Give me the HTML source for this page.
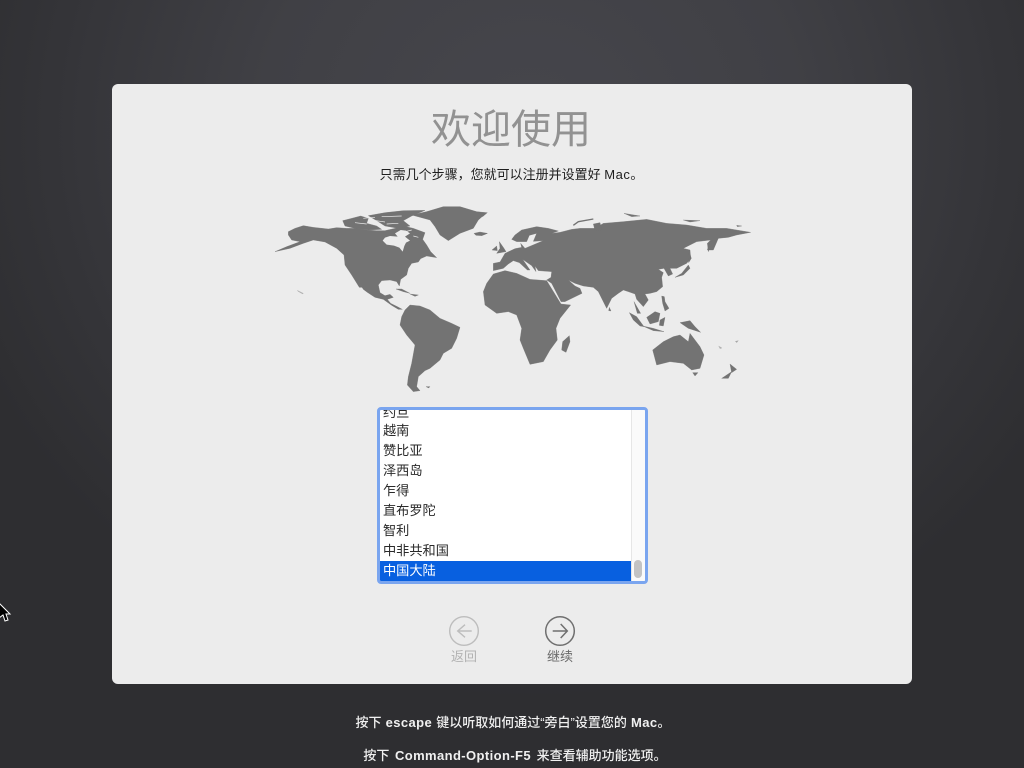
<!DOCTYPE html>
<html lang="zh-CN"><head><meta charset="utf-8"><title>欢迎使用</title>
<style>
html,body{margin:0;padding:0;width:1024px;height:768px;overflow:hidden;background:#2e2e31}
body{position:relative;font-family:"Liberation Sans","Noto Sans CJK SC",sans-serif}
#bg{position:absolute;inset:0;background:radial-gradient(ellipse 600px 570px at 530px 130px,#46464c 0%,#404045 45%,#343438 80%,#2e2e31 100%)}
#card{position:absolute;left:112px;top:84px;width:800px;height:600px;background:#ececec;border-radius:6px}
.t{position:absolute;white-space:nowrap}
#h{left:0;width:1022px;top:99.5px;text-align:center;font-size:40px;line-height:60px;color:#929292}
#s{left:0;width:1023px;top:165px;text-align:center;font-size:13px;line-height:20px;color:#1e1e1e}
#s span{letter-spacing:.5px}
#list{position:absolute;left:377px;top:407px;width:265px;height:171px;border:3px solid #7aa5ef;border-radius:4px;background:#fff;overflow:hidden}
#sb{position:absolute;left:251px;top:0;width:14px;height:171px;background:#fafafa;border-left:1px solid #e6e6e6;box-sizing:border-box}
#th{position:absolute;left:254px;top:150px;width:8px;height:18px;background:#c3c3c3;border-radius:4px}
#sel{position:absolute;left:0;top:151px;width:251px;height:19.5px;background:#0860e0}
.r{position:absolute;left:3px;font-size:13.2px;line-height:20px;color:#2a2a2a;white-space:nowrap}
.f{left:0;text-align:center;font-size:13px;line-height:20px;color:#f0f0f0;font-weight:500}
.f b{font-weight:700;font-size:13px;letter-spacing:.4px}
svg{position:absolute}
</style></head><body>
<div id="bg"></div>
<div id="card"></div>
<div class="t" id="h">欢迎使用</div>
<div class="t" id="s">只需几个步骤，您就可以注册并设置好 <span>Mac</span>。</div>

<svg style="left:0;top:0" width="1024" height="768" viewBox="0 0 1024 768">
<defs><filter id="b" x="-5%" y="-5%" width="110%" height="110%"><feGaussianBlur stdDeviation=".35"/></filter></defs>
<g filter="url(#b)">
<g fill="#737373" stroke="#737373" stroke-width="1" stroke-linejoin="round" transform="translate(270 200) scale(.33333)">
<!-- North America -->
<path d="M55,95L75,85L100,77L130,82L175,87L200,83L230,85L260,85L290,90L320,92L345,92L375,85L400,78L430,85L465,98L458,118L470,135L482,155L500,173L470,168L452,176L445,186L425,190L415,205L410,225L392,238L388,258L380,245L360,240L335,242L325,255L330,278L345,287L360,283L370,292L352,298L362,310L382,320L397,328L385,328L365,316L340,298L315,292L292,277L280,268L262,240L276,262L268,262L245,225L225,195L222,165L200,145L165,126L130,120L100,130L60,145L15,155L50,140L90,125L65,120L55,105Z"/>
<path fill="#ececec" stroke="none" d="M338,122L345,113L360,108L383,110L375,100L392,90L408,92L420,100L405,110L420,122L408,128L403,138L398,155L388,143L372,137L350,134Z"/>
<path fill="none" stroke="#ececec" stroke-width="2" d="M430,108L445,112M395,98L425,90"/>
<!-- Arctic islands -->
<path d="M218,62L245,55L272,48L295,55L290,70L320,78L335,88L295,90L255,85L225,78Z"/>
<path d="M295,47L345,38L400,32L465,31L425,48L400,62L420,78L385,85L345,78L320,62Z"/>
<path fill="none" stroke="#ececec" stroke-width="2" d="M255,68L290,72M305,60L345,66M335,50L395,48M350,72L385,70M280,55L315,52"/>
<!-- Greenland -->
<path d="M425,45L470,35L520,20L570,20L620,35L650,38L625,60L610,85L570,100L535,122L510,105L495,80L480,60Z"/>
<path d="M612,100L630,96L652,100L635,107L618,106Z"/>
<!-- Caribbean -->
<path d="M378,267L395,267L420,280L400,275Z"/><path d="M420,282L445,285L435,289Z"/>
<path d="M82,271L100,280L98,282L84,274Z" opacity=".5"/>
<!-- South America -->
<path d="M395,350L405,330L420,315L450,318L480,330L510,355L545,370L570,382L560,415L545,445L520,460L510,480L480,505L465,512L445,530L440,560L450,572L430,575L412,555L415,530L425,490L435,435L410,405L390,375Z"/>
<path d="M468,560L480,560L476,564Z"/>
</g>
<g fill="#737373" stroke="#737373" stroke-width="1" stroke-linejoin="round" transform="translate(480 200) scale(.33333)">
<!-- Eurasia -->
<path d="M40,212L40,190L60,186L75,160L105,146L125,142L122,130L135,145L190,122L160,124L170,100L148,106L140,125L110,125L95,118L105,105L125,90L170,80L205,85L235,93L215,100L240,97L275,88L300,85L345,85L370,70L430,65L500,58L560,70L620,75L680,85L740,85L812,97L770,105L745,112L715,115L695,132L685,155L682,130L692,120L650,125L610,145L630,150L632,175L620,190L590,205L570,205L578,222L565,228L552,205L535,208L550,218L545,232L548,260L530,275L510,280L495,282L505,300L490,320L470,298L465,282L445,275L430,270L415,280L395,295L380,325L365,295L355,275L340,262L310,258L285,250L265,240L285,258L300,265L306,280L255,305L243,305L215,250L200,240L213,232L215,215L175,212L165,198L168,215L155,197L128,178L150,210L142,210L118,188L100,182L85,192L70,205Z"/>
<!-- Malay -->
<path d="M462,305L482,340L472,340Z"/>
<!-- Africa -->
<path d="M10,275L20,250L40,222L75,212L110,220L150,238L200,242L243,312L272,315L240,355L228,385L232,420L210,450L190,485L150,493L130,445L120,420L125,385L110,345L85,335L50,340L15,315Z"/>
<path d="M268,407L270,425L258,457L245,450L248,425Z"/>
<!-- UK / Iceland part -->
<path d="M58,125L72,145L78,155L50,160L60,145Z"/><path d="M36,150L50,138L52,152Z"/>
<path d="M0,40L22,38L8,50Z"/><path d="M0,100L22,100L5,107Z"/>
<!-- Arctic -->
<path fill="none" stroke-width="4" d="M280,76L295,65L340,57"/><path d="M340,72L360,68L365,90L345,92Z"/>
<path d="M432,40L480,48L455,50Z"/><path d="M610,60L660,62L630,66Z"/><path d="M770,76L785,78L772,80Z"/>
<!-- Sakhalin / Japan -->
<path d="M682,150L690,125L715,115L700,150Z"/>
<path d="M585,232L605,220L625,195L630,205L610,225Z"/><path d="M628,155L634,175L626,188L624,165Z"/>
<!-- SE Asia islands -->
<path d="M448,338L470,350L492,380L480,378L460,360Z"/>
<path d="M500,352L525,335L540,340L535,365L510,372Z"/>
<path d="M488,378L520,385L552,395L520,392Z"/>
<path d="M540,360L555,352L550,378L538,376Z"/>
<path d="M545,288L553,290L555,305L567,325L555,333L548,310Z"/>
<path d="M600,368L630,362L645,380L662,397L625,385Z"/>
<path d="M388,322L393,333L386,332Z"/>
<!-- Australia -->
<path d="M518,450L550,425L580,410L600,405L625,425L630,400L660,440L672,465L660,505L635,510L610,490L570,485L530,495Z"/>
<path d="M638,518L654,518L645,528Z"/>
<path d="M750,492L770,508L755,518Z"/><path d="M725,535L755,515L745,535Z"/>
<path d="M716,438L726,444L720,446Z" opacity=".5"/><path d="M766,424L775,422L770,428Z" opacity=".6"/>
</g>
</g>
</svg>

<div id="list">
<div class="r" style="top:-7px">约旦</div>
<div class="r" style="top:11px">越南</div>
<div class="r" style="top:31px">赞比亚</div>
<div class="r" style="top:51px">泽西岛</div>
<div class="r" style="top:71px">乍得</div>
<div class="r" style="top:91px">直布罗陀</div>
<div class="r" style="top:111px">智利</div>
<div class="r" style="top:131px">中非共和国</div>
<div id="sel"></div>
<div class="r" style="top:151px;color:#fff">中国大陆</div>
<div id="sb"></div><div id="th"></div>
</div>

<svg style="left:445px;top:612px" width="40" height="40" viewBox="0 0 40 40" fill="none" stroke="#bdbdbd" stroke-width="1.4">
<circle cx="19" cy="19" r="14.3"/><path d="M26.7,19H12.7M20,12.7L12.7,19 20,25.3"/></svg>
<svg style="left:541px;top:612px" width="40" height="40" viewBox="0 0 40 40" fill="none" stroke="#6f6f6f" stroke-width="1.5">
<circle cx="19" cy="19" r="14.3"/><path d="M11.7,19H26.3M19.7,12L26.3,19 19.7,26"/></svg>
<div class="t" style="left:430px;width:68px;top:647px;text-align:center;font-size:13px;line-height:20px;color:#b2b2b2">返回</div>
<div class="t" style="left:526px;width:68px;top:647px;text-align:center;font-size:13px;line-height:20px;color:#6a6a6a">继续</div>

<div class="t f" style="top:712.5px;width:1026px;word-spacing:.5px">按下 <b>escape</b> 键以听取如何通过“旁白”设置您的 <b>Mac</b>。</div>
<div class="t f" style="top:745.5px;width:1030px;word-spacing:2px">按下 <b>Command-Option-F5</b> 来查看辅助功能选项。</div>

<svg style="left:0;top:603px" width="14" height="20" viewBox="0 0 14 20">
<path d="M-1,0L10,11L6,11L8,17L5,18L3,12L-1,15Z" fill="#000" stroke="#fff" stroke-width="1"/></svg>
</body></html>
